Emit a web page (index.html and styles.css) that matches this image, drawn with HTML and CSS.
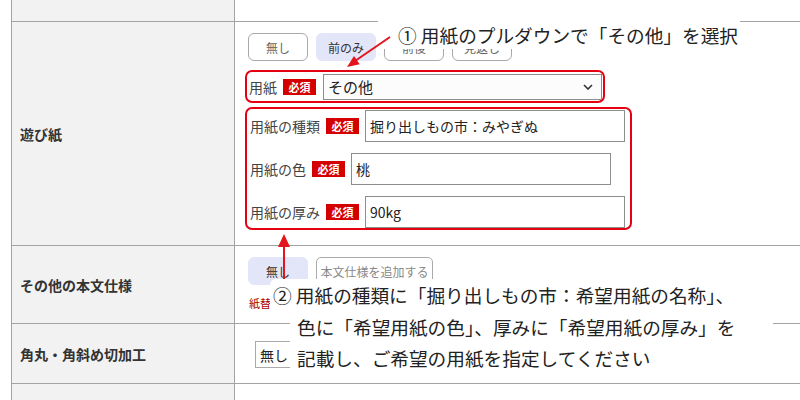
FILE: index.html
```html
<!DOCTYPE html>
<html lang="ja">
<head>
  <meta charset="UTF-8" />
  <title>遊び紙</title>
  <link rel="stylesheet" href="styles.css">
</head>
<body>
  <div class="sheet">
    <div class="row row-top">
      <div class="head"></div>
      <div class="cell"></div>
    </div>

    <div class="row row-paper">
      <div class="head">遊び紙</div>
      <div class="cell">
        <div class="choices">
          <button class="choice">無し</button>
          <button class="choice is-on">前のみ</button>
          <button class="choice">前後</button>
          <button class="choice">見返し</button>
        </div>

        <div class="field-box field-one">
          <label>用紙</label>
          <span class="req">必須</span>
          <span class="select-wrap">
            <select class="paper-select">
              <option>その他</option>
            </select>
            <svg class="chevron" width="10" height="6" viewBox="0 0 10 6"><path d="M1 1 L5 5 L9 1" fill="none" stroke="#333" stroke-width="1.6"/></svg>
          </span>
        </div>

        <div class="field-box field-group">
          <div class="field">
            <label>用紙の種類</label>
            <span class="req">必須</span>
            <input type="text" value="掘り出しもの市：みやぎぬ">
          </div>
          <div class="field">
            <label>用紙の色</label>
            <span class="req">必須</span>
            <input type="text" value="桃">
          </div>
          <div class="field">
            <label>用紙の厚み</label>
            <span class="req">必須</span>
            <input type="text" value="90kg">
          </div>
        </div>
      </div>
    </div>

    <div class="row row-spec">
      <div class="head">その他の本文仕様</div>
      <div class="cell">
        <div class="choices">
          <button class="choice is-on">無し</button>
          <button class="add-btn">本文仕様を追加する</button>
        </div>
        <p class="spec-note">紙替えの場合は本文仕様を追加してください</p>
      </div>
    </div>

    <div class="row row-corner">
      <div class="head">角丸・角斜め切加工</div>
      <div class="cell">
        <select class="small-select">
          <option>無し</option>
        </select>
      </div>
    </div>

    <div class="row row-end">
      <div class="head"></div>
      <div class="cell"></div>
    </div>
  </div>

  <!-- annotations -->
  <div class="note note-one">① 用紙のプルダウンで「その他」を選択</div>
  <div class="note-two">
    <div class="first">② 用紙の種類に「掘り出しもの市：希望用紙の名称」、</div>
    <div class="rest">色に「希望用紙の色」、厚みに「希望用紙の厚み」を<br>記載し、ご希望の用紙を指定してください</div>
  </div>

  <svg class="marks" width="800" height="400" viewBox="0 0 800 400">
    <line x1="390" y1="37" x2="355" y2="61" stroke="#e3141b" stroke-width="2"/>
    <polygon points="347,67 359.7,64.2 354,56" fill="#e3141b"/>
    <line x1="284" y1="279" x2="284" y2="245" stroke="#e3141b" stroke-width="2"/>
    <polygon points="284,234 278,247 290,247" fill="#e3141b"/>
  </svg>
</body>
</html>
```

FILE: styles.css
```css
* {
  box-sizing: border-box;
}

body {
  margin: 0;
  font-family: "Noto Sans CJK JP", "Noto Sans", sans-serif;
  color: #333;
  background: #fff;
  width: 800px;
  height: 400px;
  overflow: hidden;
  position: relative;
}

.sheet {
  margin-left: 11px;
}

.row {
  display: grid;
  grid-template-columns: 224px 1fr;
  border-bottom: 1px solid #a3a3a3;
}

.row-top { height: 22px; }
.row-paper { height: 224px; }
.row-spec { height: 78px; }
.row-corner { height: 60px; }
.row-end { height: 16px; border-bottom: none; }

.head {
  background: #f2f2f2;
  border-left: 1px solid #a3a3a3;
  border-right: 1px solid #a3a3a3;
  display: flex;
  align-items: center;
  padding-left: 8px;
  font-size: 14px;
  font-weight: bold;
  color: #333;
}

.cell {
  padding: 11px 0 0 10px;
}

.row-end .cell,
.row-top .cell {
  padding: 0;
}

.choices {
  display: flex;
  gap: 8px;
  margin-left: 3px;
}

.choice {
  width: 60px;
  height: 28px;
  border: 1px solid #a8a8a8;
  border-radius: 6px;
  background: #fff;
  color: #666;
  font: 12px "Noto Sans CJK JP", sans-serif;
  padding: 0;
}

.choice.is-on {
  background: #e3e5f9;
  border-color: #e3e5f9;
  color: #333;
}

.add-btn {
  width: 117px;
  height: 28px;
  border: 1px solid #aaa;
  border-radius: 5px;
  background: #fff;
  color: #888;
  font: 12px "Noto Sans CJK JP", sans-serif;
  padding: 0;
}

.field-box {
  border: 2px solid #e50012;
  border-radius: 7px;
}

.field-one {
  width: 360px;
  height: 33px;
  margin-top: 9px;
  display: flex;
  align-items: center;
  gap: 6px;
  padding-left: 2px;
}

.field-one label,
.field label {
  font-size: 14px;
  color: #444;
}

.req {
  width: 33px;
  height: 16px;
  background: #d40000;
  color: #fff;
  font-size: 11px;
  font-weight: bold;
  display: flex;
  align-items: center;
  justify-content: center;
  flex-shrink: 0;
}

.select-wrap {
  position: relative;
  margin-left: 1px;
}

.paper-select {
  appearance: none;
  display: block;
  width: 279px;
  height: 26px;
  border: 1px solid #8d8d8d;
  border-radius: 0;
  background: #fcfcfc;
  padding: 0 4px;
  font: 15px "Noto Sans CJK JP", sans-serif;
  color: #222;
}

.chevron {
  position: absolute;
  right: 9px;
  top: 10px;
}

.field-group {
  width: 387px;
  height: 123px;
  margin-top: 4px;
  padding: 1px 0 0 3px;
  display: flex;
  flex-direction: column;
  gap: 11px;
}

.field {
  display: flex;
  align-items: center;
  gap: 6px;
  height: 32px;
}

.field input {
  width: 260px;
  height: 32px;
  border: 1px solid #8d8d8d;
  padding: 0 4px;
  font: 14px "Noto Sans CJK JP", sans-serif;
  color: #222;
  background: #fff;
}

.spec-note {
  margin: 10px 0 0 4px;
  font-size: 11px;
  line-height: 16px;
  color: #a00;
}

.small-select {
  appearance: none;
  display: block;
  margin: 6px 0 0 10px;
  width: 80px;
  height: 27px;
  border: 1px solid #aaa;
  border-radius: 0;
  background: #fff;
  padding: 0 4px;
  font: 14px "Noto Sans CJK JP", sans-serif;
  color: #222;
}

.note {
  position: absolute;
  background: #fff;
  color: #222;
  font-size: 18.67px;
  white-space: nowrap;
}

.note-one {
  left: 378px;
  top: 20px;
  width: 362px;
  height: 29px;
  line-height: 29px;
  padding-left: 20px;
}

.note-two {
  position: absolute;
  left: 270px;
  top: 279px;
  color: #222;
  font-size: 18.67px;
  white-space: nowrap;
}

.note-two .first {
  background: #fff;
  border-radius: 6px;
  padding-left: 3px;
  line-height: 31.5px;
  width: 475px;
}

.note-two .rest {
  margin-left: 20px;
  width: 483px;
  padding-left: 7px;
  line-height: 31.5px;
  background: #fff;
  border-radius: 6px;
}

.marks {
  position: absolute;
  left: 0;
  top: 0;
  pointer-events: none;
}
```
